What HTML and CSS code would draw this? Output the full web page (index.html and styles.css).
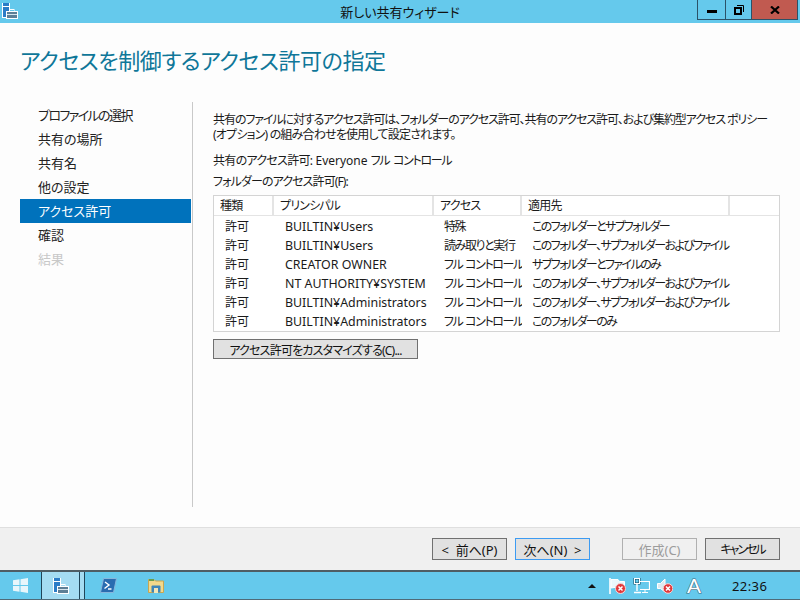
FILE: index.html
```html
<!DOCTYPE html>
<html lang="ja">
<head>
<meta charset="utf-8">
<title>新しい共有ウィザード</title>
<link rel="stylesheet" href="styles.css">
</head>
<body>
<svg class="defs" width="0" height="0" aria-hidden="true">
  <symbol id="server-mgr" viewBox="0 0 16 16">
    <rect x="0" y="0" width="8" height="15" fill="#fff"/>
    <rect x="1" y="0" width="6" height="3" fill="#2b7cc7"/>
    <rect x="1" y="4" width="6" height="10" fill="#2b7cc7"/>
    <rect x="4.500" y="8.500" width="11" height="7" fill="#5d7f96" stroke="#fff"/>
    <rect x="8" y="6.500" width="4" height="2" fill="none" stroke="#fff"/>
    <rect x="5" y="11" width="10" height="1" fill="#d5e4ec"/>
  </symbol>
</svg>
<div class="desktop">
  <div class="window">
    <header class="titlebar">
      <svg class="app-icon" width="16" height="16"><use href="#server-mgr"/></svg>
      <div class="title">新しい共有ウィザード</div>
      <div class="controls">
        <div class="ctl ctl-min"><span class="min-glyph"></span></div>
        <div class="ctl ctl-max"><svg width="10" height="10" viewBox="0 0 10 10"><path d="M3 .5H9.500V7" fill="none" stroke="#000"/><rect x="1" y="3" width="6" height="6" fill="none" stroke="#000" stroke-width="2"/></svg></div>
        <div class="ctl ctl-close"><svg width="10" height="8" viewBox="0 0 10 8"><path d="M1 0.500L9 7.500M9 0.500L1 7.500" stroke="#000" stroke-width="2.200"/></svg></div>
      </div>
    </header>
    <h1 class="heading">アクセスを制御するアクセス許可の指定</h1>
    <main class="main">
      <nav class="nav">
        <div class="nav-item nav-tight">プロファイルの選択</div>
        <div class="nav-item">共有の場所</div>
        <div class="nav-item">共有名</div>
        <div class="nav-item">他の設定</div>
        <div class="nav-item is-active">アクセス許可</div>
        <div class="nav-item">確認</div>
        <div class="nav-item is-off">結果</div>
      </nav>
      <section class="content">
        <p class="intro"><span class="intro-a">共有のファイルに対するアクセス許可は、フォルダーのアクセス許可、共有のアクセス許可、および集約型アクセス ポリシー</span><br><span class="intro-b">(オプション) の組み合わせを使用して設定されます。</span></p>
        <p class="share"><span class="tight">共有のアクセス許可:</span> Everyone <span class="tight-more">フル コントロール</span></p>
        <p class="folder">フォルダーのアクセス許可(F):</p>
        <table class="grid">
          <thead>
            <tr><th class="c1">種類</th><th class="c2">プリンシパル</th><th class="c3">アクセス</th><th class="c4">適用先</th><th class="c5"></th></tr>
          </thead>
          <tbody>
            <tr><td>許可</td><td>BUILTIN¥Users</td><td>特殊</td><td colspan="2">このフォルダーとサブフォルダー</td></tr>
            <tr><td>許可</td><td>BUILTIN¥Users</td><td>読み取りと実行</td><td colspan="2">このフォルダー、サブフォルダーおよびファイル</td></tr>
            <tr><td>許可</td><td>CREATOR OWNER</td><td>フル コントロール</td><td colspan="2">サブフォルダーとファイルのみ</td></tr>
            <tr><td>許可</td><td>NT AUTHORITY¥SYSTEM</td><td>フル コントロール</td><td colspan="2">このフォルダー、サブフォルダーおよびファイル</td></tr>
            <tr><td>許可</td><td>BUILTIN¥Administrators</td><td>フル コントロール</td><td colspan="2">このフォルダー、サブフォルダーおよびファイル</td></tr>
            <tr><td>許可</td><td>BUILTIN¥Administrators</td><td>フル コントロール</td><td colspan="2">このフォルダーのみ</td></tr>
          </tbody>
        </table>
        <button class="btn btn-custom" type="button">アクセス許可をカスタマイズする(C)...</button>
      </section>
    </main>
    <footer class="footer">
      <button class="btn btn-wiz" type="button">&lt;&nbsp;&nbsp;前へ(P)</button>
      <button class="btn btn-wiz is-default" type="button">次へ(N)&nbsp;&nbsp;&gt;</button>
      <button class="btn btn-wiz is-disabled btn-create" type="button">作成(C)</button>
      <button class="btn btn-wiz btn-cancel" type="button">キャンセル</button>
    </footer>
  </div>
  <div class="taskbar">
    <div class="start"><svg width="15" height="15" viewBox="0 0 15 15"><path d="M0 2.300L6.500 1.300V7H0ZM7.500 1.200L15 0V7H7.500ZM0 8H6.500V13.700L0 12.700ZM7.500 8H15V15L7.500 13.800Z" fill="#e8f6fb"/></svg></div>
    <div class="task-active">
      <div class="task-main"><svg width="16" height="16"><use href="#server-mgr"/></svg></div>
      <div class="task-split"></div>
    </div>
    <div class="task"><svg width="17" height="15" viewBox="0 0 17 15"><path d="M3.500 0.500H16.500L13.500 14.500H0.500Z" fill="#2a6cb0" stroke="#86b6dc"/><path d="M5 4L9 7L4.500 10.500M8 11H11.500" fill="none" stroke="#fff" stroke-width="1.400"/></svg></div>
    <div class="task"><svg width="16" height="15" viewBox="0 0 16 15"><path d="M0.500 1.500H6L7.500 3H15.500V14.500H0.500Z" fill="#f3d98b" stroke="#c9a650"/><rect x="1" y="1" width="5" height="2" fill="#6b9e4c"/><rect x="3.500" y="7.500" width="9" height="7" rx="1" fill="#3f86b8"/><rect x="6" y="10" width="4" height="5" fill="#f3e6ba"/></svg></div>
    <div class="tray">
      <span class="tray-arrow"></span>
      <svg class="tray-icon" width="17" height="16" viewBox="0 0 17 16"><path d="M1 0V16" stroke="#fff" stroke-width="1.600"/><path d="M2 1.500H9L10.500 3.500H15.500V8L2 10Z" fill="#eaf7fc" stroke="#fff"/><circle cx="11.500" cy="10.500" r="5" fill="#e0373a" stroke="#f5d5d5" stroke-width="1"/><path d="M9.500 8.500L13.500 12.500M13.500 8.500L9.500 12.500" stroke="#fff" stroke-width="1.500"/></svg>
      <svg class="tray-icon" width="17" height="16" viewBox="0 0 17 16"><rect x="1.500" y="0.500" width="5" height="5" fill="none" stroke="#17475c" stroke-width="2"/><rect x="1.500" y="0.500" width="5" height="5" fill="none" stroke="#fff"/><path d="M4 6V13M1 14.500H8" fill="none" stroke="#fff" stroke-width="1.400"/><path d="M7 3.500H16.500V11.500H7" fill="none" stroke="#fff" stroke-width="1.200"/><path d="M12 12V14M9 14.500H15" stroke="#fff"/></svg>
      <svg class="tray-icon" width="16" height="16" viewBox="0 0 16 16"><path d="M0.500 5.500H3.500L8 1V14L3.500 10.500H0.500Z" fill="#dceaf0" stroke="#fff"/><circle cx="11" cy="10.500" r="4.800" fill="#e0373a" stroke="#f5d5d5" stroke-width="1"/><path d="M9 8.500L13 12.500M13 8.500L9 12.500" stroke="#fff" stroke-width="1.500"/></svg>
      <span class="tray-ime">A</span>
      <span class="clock">22:36</span>
    </div>
  </div>
</div>
</body>
</html>
```
FILE: styles.css
```css
* { box-sizing: border-box; }
html, body { margin: 0; padding: 0; }
body {
  font-family: "Noto Sans", "Noto Sans CJK JP", sans-serif;
  font-feature-settings: "palt";
  font-size: 12px;
  color: #1a1a1a;
}
.defs { position: absolute; }
.desktop { width: 800px; height: 600px; display: flex; flex-direction: column; overflow: hidden; }
.window { flex: 1; display: flex; flex-direction: column; background: #fdfdfd; min-height: 0; }

.titlebar { height: 23px; background: #65c9ec; display: grid; grid-template-columns: 1fr auto 1fr; align-items: start; }
.app-icon { margin-left: 2px; margin-top: 3px; }
.title { font-size: 13px; line-height: 24px; color: #111; }
.controls { display: flex; margin-right: 2px; justify-self: end; }
.ctl { height: 20px; display: flex; align-items: center; justify-content: center; border: 1px solid #2b5268; border-top: 0; }
.ctl-min { width: 29px; }
.ctl-max { width: 26px; border-left: 0; }
.ctl-close { width: 46px; border-left: 0; background: #c15a50; }
.min-glyph { width: 10px; height: 3px; background: #000; margin-top: 3px; }

.heading { margin: 0; padding: 21px 0 0 20px; height: 79px; font-size: 22px; font-weight: 400; line-height: 32px; color: #0f7799; white-space: nowrap; letter-spacing: -.4px; }

.main { flex: 1; display: flex; min-height: 0; padding-bottom: 20px; }
.nav { width: 173px; margin-left: 20px; border-right: 1px solid #c9c9c9; padding-top: 1px; padding-right: 1px; flex: none; height: 405px; }
.nav-item { height: 24px; line-height: 24px; padding-left: 18px; font-size: 13px; color: #222; }
.nav-tight { letter-spacing: -1.6px; }
.nav-item.is-active { background: #0072bc; color: #fff; }
.nav-item.is-off { color: #c8c8c8; }

.content { padding-left: 20px; width: 587px; padding-top: 10px; }
.intro { margin: 0; line-height: 15px; font-size: 12px; white-space: nowrap; }
.intro-a { letter-spacing: -1.09px; }
.intro-b { letter-spacing: -.8px; }
.share { margin: 11px 0 0; line-height: 16px; }
.tight { letter-spacing: -.7px; }
.tight-more { letter-spacing: -1.3px; word-spacing: 2px; }
.folder { margin: 5px 0 0; line-height: 16px; letter-spacing: -.9px; }
.grid { margin-top: 5px; width: 567px; table-layout: fixed; border-collapse: separate; border-spacing: 0; border: 1px solid #d4d4d4; background: #fff; }
.grid th { height: 20px; font-weight: 400; text-align: left; padding: 0 0 0 6px; border-right: 2px solid #e4e4e4; border-bottom: 1px solid #e4e4e4; line-height: 16px; white-space: nowrap; letter-spacing: -.8px; }
.grid th.c5 { border-right: 0; }
.c1 { width: 60px; }
.c2 { width: 160px; }
.c3 { width: 88px; }
.c4 { width: 208px; }
.grid td { height: 19px; padding: 3px 0 0 11px; line-height: 16px; white-space: nowrap; overflow: hidden; vertical-align: top; }
.grid tbody tr:last-child td { height: 20px; }
.grid td:nth-child(2) { font-size: 12.4px; }
.grid td:nth-child(3) { letter-spacing: -1.4px; word-spacing: 1px; padding-left: 10px; }
.grid td:nth-child(4) { letter-spacing: -1.6px; padding-left: 10px; }

.btn { font: inherit; font-feature-settings: "palt"; color: #111; background: #e1e1e1; border: 1px solid #707070; padding: 0; display: block; white-space: nowrap; }
.btn-custom { margin-top: 7px; width: 205px; height: 20px; line-height: 16px; letter-spacing: -.8px; padding-top: 3px; }

.footer { height: 43px; background: #f0f0f0; border-top: 1px solid #dfdfdf; display: flex; padding: 10px 20px 0 432px; gap: 8px; flex: none; }
.btn-wiz { width: 75px; height: 22px; line-height: 16px; font-size: 13px; padding-top: 2px; }
.btn-wiz.is-default { border-color: #3c9bf2; }
.btn-wiz.is-disabled { background: #f0f0f0; border-color: #b0b0b0; color: #9c9c9c; }
.btn-create { margin-left: 24px; }
.btn-cancel { font-size: 12px; letter-spacing: -2px; }

.taskbar { height: 30px; flex: none; background: #65c9ec; border-top: 2px solid #4f5d64; border-bottom: 1px solid #4f6a78; display: flex; align-items: center; }
.start { width: 41px; height: 100%; display: flex; align-items: center; justify-content: center; }
.task-active { display: flex; height: 100%; width: 44px; background: #a4dcf2; border-left: 1px solid #1f4559; border-right: 1px solid #1f4559; }
.task-main { width: 38px; border-right: 1px solid #1f4559; display: flex; align-items: center; justify-content: center; }
.task-split { flex: 1; }
.task { width: 47px; display: flex; align-items: center; justify-content: center; }
.tray { margin-left: auto; display: flex; align-items: center; height: 100%; }
.tray-arrow { width: 0; height: 0; border-left: 4px solid transparent; border-right: 4px solid transparent; border-bottom: 4px solid #111; margin-right: 13px; }
.tray-icon { margin-right: 7px; flex: none; }
.tray-ime { font-size: 21px; font-family: "Liberation Sans", sans-serif; color: #fff; -webkit-text-stroke: 1.2px #3b6a80; paint-order: stroke fill; margin-left: 7px; width: 20px; line-height: 24px; }
.clock { font-size: 13px; color: #111; margin-left: 25px; width: 68px; letter-spacing: .4px; }
```
